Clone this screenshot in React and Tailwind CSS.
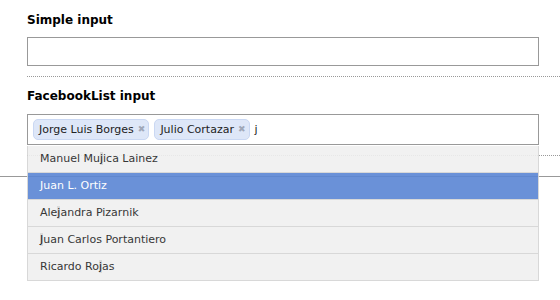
const tokens = ["Jorge Luis Borges", "Julio Cortazar"];

const results = [
  { name: "Manuel Mujica Lainez", at: 9 },
  { name: "Juan L. Ortiz", at: 0 },
  { name: "Alejandra Pizarnik", at: 3 },
  { name: "Juan Carlos Portantiero", at: 0 },
  { name: "Ricardo Rojas", at: 10 },
];

function Match({ name, at, active }) {
  return (
    <span>
      {name.slice(0, at)}
      <span className={active ? "text-white" : "bg-[#d6d6d6] text-black"}>
        {name.slice(at, at + 1)}
      </span>
      {name.slice(at + 1)}
    </span>
  );
}

export default function App() {
  return (
    <div className="relative h-[300px] w-[560px] overflow-hidden bg-white font-['DejaVu_Sans',sans-serif] text-[#222]">
      <div className="ml-[27px] border-b border-dotted border-[#999] pt-[13px] pb-[10px]">
        <h3 className="mb-[9px] text-[12px] font-bold leading-[15px] text-black">Simple input</h3>
        <div className="h-[29px] w-[512px] border border-[#999] bg-white"></div>
      </div>

      <div className="ml-[27px] border-b border-dotted border-[#999] pt-[12px] pb-[10px]">
        <h3 className="mb-[10px] text-[12px] font-bold leading-[15px] text-black">FacebookList input</h3>
        <div className="flex h-[31px] w-[512px] items-center gap-[5px] border border-[#999] bg-white px-[5px]">
          {tokens.map((t) => (
            <span
              key={t}
              className="flex h-[21px] items-center gap-[4px] rounded-[5px] border border-[#cad8f3] bg-[#dee7f8] pr-[3px] pl-[5px] text-[11px] leading-[19px]"
            >
              {t}
              <span className="text-[9px] text-[#a0a8b8]">✖</span>
            </span>
          ))}
          <span className="text-[11px] leading-[19px]">j</span>
        </div>
      </div>

      <div className="mt-[20px] border-t border-[#999]"></div>

      <ul className="absolute top-[146px] left-[27px] w-[512px] border-x border-[#d4d4d4] bg-[#f0f0f0] opacity-90">
        {results.map((r, i) => {
          const active = i === 1;
          return (
            <li
              key={r.name}
              className={
                active
                  ? "flex h-[27px] items-center border-b border-[#d4d4d4] bg-[#5a86d4] pl-[12px] text-[11px] leading-[26px] text-white"
                  : "flex h-[27px] items-center border-b border-[#d4d4d4] pl-[12px] text-[11px] leading-[26px] text-[#222]"
              }
            >
              <Match name={r.name} at={r.at} active={active} />
            </li>
          );
        })}
      </ul>
    </div>
  );
}
